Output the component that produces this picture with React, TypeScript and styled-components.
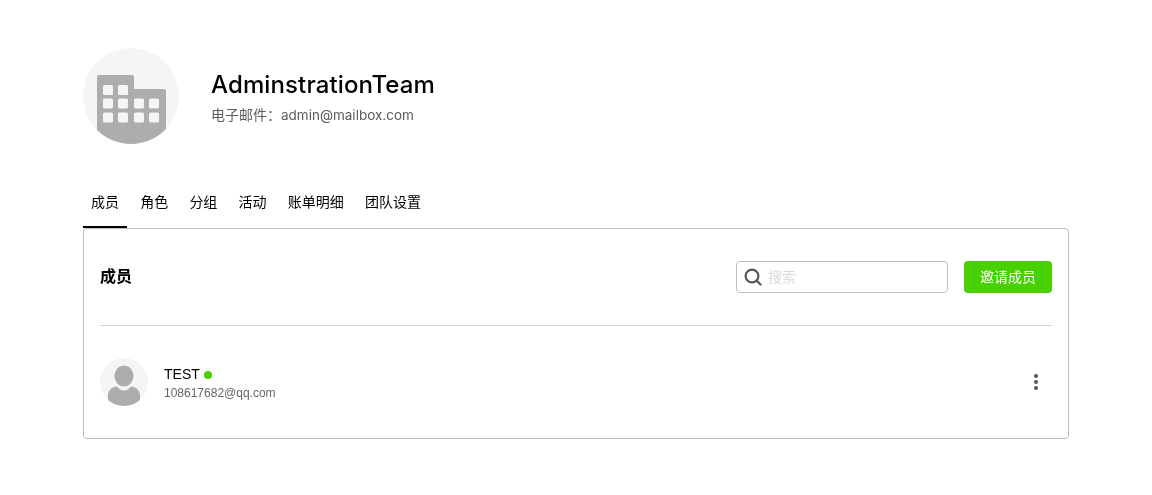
import React from "react"
import styled, { createGlobalStyle } from "styled-components"

const CJK = `"Noto Sans CJK SC"`

const tabs = ["成员", "角色", "分组", "活动", "账单明细", "团队设置"]

const GlobalStyle = createGlobalStyle`
  html, body {
    margin: 0;
    padding: 0;
    background: #fff;
  }

  body {
    font-family: Inter, ${CJK}, sans-serif;
    color: #000;
  }
`

const TeamIcon = () => (
  <AvatarSvg viewBox="0 0 96 96" width="96" height="96">
    <defs>
      <clipPath id="team-clip">
        <circle cx="48" cy="48" r="48" />
      </clipPath>
    </defs>
    <circle cx="48" cy="48" r="48" fill="#f5f5f5" />
    <g clipPath="url(#team-clip)">
      <path
        d="M14 29a2 2 0 0 1 2-2h33a2 2 0 0 1 2 2v12h30a2 2 0 0 1 2 2v53H14z"
        fill="#adadad"
      />
      {[
        [20, 37], [35, 37],
        [20, 50.5], [35, 50.5], [51, 50.5], [66, 50.5],
        [20, 64.5], [35, 64.5], [51, 64.5], [66, 64.5],
      ].map(([x, y]) => (
        <rect key={`${x}-${y}`} x={x} y={y} width="10" height="10" rx="1.5" fill="#f5f5f5" />
      ))}
    </g>
  </AvatarSvg>
)

const UserIcon = () => (
  <AvatarSvg viewBox="0 0 48 48" width="48" height="48">
    <defs>
      <clipPath id="user-clip">
        <circle cx="24" cy="24" r="24" />
      </clipPath>
    </defs>
    <circle cx="24" cy="24" r="24" fill="#f5f5f5" />
    <g clipPath="url(#user-clip)" fill="#adadad">
      <ellipse cx="24" cy="18" rx="9.500" ry="10.500" />
      <path d="M8 48V38C8 32 12 29 17 28.500 19 31 21.500 32.500 24 32.500 26.500 32.500 29 31 31 28.500 36 29 40 32 40 38V48z" />
    </g>
  </AvatarSvg>
)

const SearchIcon = () => (
  <svg width="18" height="18" viewBox="0 0 18 18" fill="none" stroke="#555" strokeWidth="2.200">
    <circle cx="8" cy="8" r="6.400" />
    <path d="M12.800 12.800 16.500 16.500" strokeLinecap="round" />
  </svg>
)

const App: React.FC = () => (
  <Page>
    <GlobalStyle />
    <Header>
      <TeamIcon />
      <HeaderText>
        <TeamName>AdminstrationTeam</TeamName>
        <TeamMail>
          电子邮件：<MailAddress>admin@mailbox.com</MailAddress>
        </TeamMail>
      </HeaderText>
    </Header>
    <TabBar>
      {tabs.map((tab, i) => (
        <Tab key={tab} $active={i === 0}>
          {tab}
        </Tab>
      ))}
    </TabBar>
    <Card>
      <CardHead>
        <CardTitle>成员</CardTitle>
        <Actions>
          <SearchBox>
            <SearchIcon />
            <SearchInput placeholder="搜索" />
          </SearchBox>
          <InviteButton>邀请成员</InviteButton>
        </Actions>
      </CardHead>
      <MemberRow>
        <UserIcon />
        <MemberInfo>
          <MemberName>
            TEST
            <StatusDot />
          </MemberName>
          <MemberMail>108617682@qq.com</MemberMail>
        </MemberInfo>
        <MoreButton aria-label="more">
          <i />
          <i />
          <i />
        </MoreButton>
      </MemberRow>
    </Card>
  </Page>
)

const Page = styled.div`
  width: 986px;
  margin-left: 83px;
  padding-top: 48px;
  will-change: transform;
`

const AvatarSvg = styled.svg`
  display: block;
  flex-shrink: 0;
`

const Header = styled.header`
  display: flex;
  align-items: center;
  gap: 32px;
  height: 96px;
`

const HeaderText = styled.div`
  display: flex;
  flex-direction: column;
  gap: 4px;
  padding-top: 2px;
`

const TeamName = styled.h1`
  margin: 0;
  font-size: 24px;
  line-height: 32px;
  font-weight: 500;
  letter-spacing: 0.12px;
  color: #000;
`

const TeamMail = styled.div`
  font-size: 14px;
  line-height: 20px;
  color: #5c5c5c;
`

const MailAddress = styled.span`
  font-size: 13.500px;
`

const TabBar = styled.nav`
  display: flex;
  margin-top: 40px;
  height: 44px;
`

const Tab = styled.div<{ $active?: boolean }>`
  box-sizing: border-box;
  height: 44px;
  padding: 0 8px;
  margin-right: 5.200px;
  font-size: 14px;
  line-height: 36px;
  color: #000;
  border-bottom: 2px solid ${({ $active }) => ($active ? "#000" : "transparent")};
`

const Card = styled.section`
  box-sizing: border-box;
  height: 211px;
  padding: 0 16px;
  border: 1px solid #bdbdbd;
  border-radius: 4px;
`

const CardHead = styled.div`
  display: flex;
  align-items: center;
  justify-content: space-between;
  height: 96px;
  border-bottom: 1px solid #d4d4d4;
`

const CardTitle = styled.h2`
  margin: 0 0 2px;
  font-size: 16px;
  line-height: 24px;
  font-weight: 600;
`

const Actions = styled.div`
  display: flex;
  align-items: center;
  gap: 16px;
`

const SearchBox = styled.label`
  box-sizing: border-box;
  display: flex;
  align-items: center;
  gap: 6px;
  width: 212px;
  height: 32px;
  padding: 0 7px;
  border: 1px solid #bdbdbd;
  border-radius: 4px;
`

const SearchInput = styled.input`
  flex: 1;
  min-width: 0;
  border: 0;
  outline: 0;
  padding: 0 0 2px;
  font-family: Inter, ${CJK}, sans-serif;
  font-size: 14px;

  &::placeholder {
    color: #dadada;
  }
`

const InviteButton = styled.button`
  width: 88px;
  height: 32px;
  padding: 0 0 2px;
  border: 0;
  border-radius: 4px;
  background: #48d000;
  color: #fff;
  font-family: Inter, ${CJK}, sans-serif;
  font-size: 14px;
`

const MemberRow = styled.div`
  display: flex;
  align-items: center;
  gap: 16px;
  height: 112px;
`

const MemberInfo = styled.div`
  flex: 1;
  display: flex;
  flex-direction: column;
  gap: 1px;
  padding-top: 2px;
`

const MemberName = styled.div`
  display: flex;
  align-items: center;
  gap: 4px;
  font-family: "Liberation Sans", sans-serif;
  font-size: 14px;
  line-height: 18px;
`

const StatusDot = styled.span`
  width: 8px;
  height: 8px;
  margin-top: 2px;
  border-radius: 50%;
  background: #48d000;
`

const MemberMail = styled.div`
  font-family: "Liberation Sans", sans-serif;
  font-size: 12px;
  line-height: 18px;
  color: #666;
`

const MoreButton = styled.div`
  display: flex;
  flex-direction: column;
  align-items: center;
  gap: 2px;
  width: 32px;

  i {
    width: 4px;
    height: 4px;
    border-radius: 50%;
    background: #555;
  }
`

export default App
